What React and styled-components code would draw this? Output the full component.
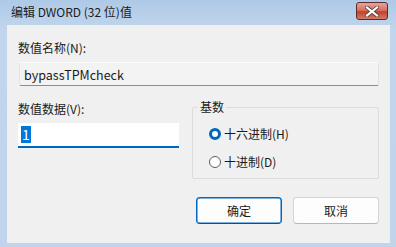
import React from "react";
import styled, { createGlobalStyle } from "styled-components";

const GlobalStyle = createGlobalStyle`
  html, body { margin: 0; padding: 0; }
  body {
    font-family: "Noto Sans CJK SC", "Noto Sans", "Liberation Sans", sans-serif;
    font-size: 12px;
    color: #1a1a1a;
  }
`;

const Window = styled.div`
  width: 396px;
  height: 247px;
  display: flex;
  flex-direction: column;
  background: linear-gradient(180deg, #aec9e7 0%, #c1d6ec 12%, #c0d5eb 100%);
  box-sizing: border-box;
`;

const TitleBar = styled.div`
  height: 25px;
  flex: none;
  display: flex;
  align-items: center;
  justify-content: space-between;
  padding: 0 8px 0 11px;
  box-sizing: border-box;
`;

const Title = styled.span`
  font-size: 12px;
  line-height: 16px;
  color: #1c1c1c;
  margin-top: -1px;
`;

const CloseButton = styled.button`
  width: 32px;
  height: 18px;
  margin-top: -3px;
  padding: 0;
  border: 1px solid #5d2a2e;
  border-radius: 3px;
  background: linear-gradient(180deg, #e8a496 0%, #d6725f 45%, #c4402b 55%, #d47a66 100%);
  display: flex;
  align-items: center;
  justify-content: center;
`;

const Panel = styled.div`
  flex: 1;
  margin: 0 6px 4px 7px;
  background: #f0f0f0;
  padding: 15px 11px 0 11px;
  display: flex;
  flex-direction: column;
`;

const Label = styled.div`
  line-height: 16px;
  height: 16px;
  color: #1a1a1a;
`;

const ReadOnlyField = styled.div`
  margin: 6px 0 0 1px;
  height: 24px;
  box-sizing: border-box;
  border: 1px solid #e3e3e3;
  border-top-color: #fbfbfb;
  border-bottom-color: #8d8d8d;
  border-radius: 2px;
  background: #f3f3f3;
  padding: 0 4px;
  display: flex;
  align-items: center;
  font-size: 12.5px;
  color: #1a1a1a;
`;

const Row = styled.div`
  display: flex;
  gap: 13px;
  margin-top: 15px;
`;

const Column = styled.div`
  width: 161px;
  display: flex;
  flex-direction: column;
`;

const EditField = styled.div`
  margin-top: 6px;
  height: 25px;
  box-sizing: border-box;
  background: #ffffff;
  border-bottom: 2px solid #0067c0;
  padding: 0 3px;
  display: flex;
  align-items: center;
`;

const Selected = styled.span`
  background: #0078d7;
  color: #ffffff;
  font-size: 14px;
  line-height: 17px;
  padding: 0 1px;
`;

const Group = styled.fieldset`
  flex: 1;
  margin: 0;
  margin-top: -2px;
  padding: 10px 0 0 0;
  height: 80px;
  box-sizing: border-box;
  border: 1px solid #dcdcdc;
  border-radius: 2px;
  display: flex;
  flex-direction: column;
  gap: 10px;
`;

const Legend = styled.legend`
  padding: 0 2px;
  margin-left: 5px;
  line-height: 16px;
`;

const Option = styled.label`
  display: flex;
  align-items: center;
  gap: 3px;
  height: 18px;
  line-height: 16px;
  padding-left: 16px;
`;

const Radio = styled.span`
  width: 12px;
  height: 12px;
  box-sizing: border-box;
  border-radius: 50%;
  border: ${(p) => (p.$checked ? "3.5px solid #0067c0" : "1px solid #5c5c5c")};
  background: #ffffff;
  flex: none;
`;

const Footer = styled.div`
  display: flex;
  justify-content: flex-end;
  gap: 11px;
  margin-top: 18px;
`;

const Button = styled.button`
  width: 86px;
  height: 27px;
  box-sizing: border-box;
  border-radius: 4px;
  font-family: inherit;
  font-size: 12px;
  color: #1a1a1a;
  background: #fdfdfd;
  border: 1px solid ${(p) => (p.$primary ? "#0067c0" : "#d4d4d4")};
  border-bottom-color: ${(p) => (p.$primary ? "#00539c" : "#b8b8b8")};
  box-shadow: ${(p) => (p.$primary ? "inset 0 0 0 0.5px #0067c0" : "none")};
`;

const CloseGlyph = () => (
  <svg width="14" height="11" viewBox="0 0 14 11">
    <path
      d="M2 1.5 L12 9.5 M12 1.5 L2 9.5"
      stroke="#4a3a3a"
      strokeWidth="3.6"
      strokeLinecap="square"
    />
    <path
      d="M2 1.5 L12 9.5 M12 1.5 L2 9.5"
      stroke="#ffffff"
      strokeWidth="2.2"
      strokeLinecap="square"
    />
  </svg>
);

const options = [
  { label: "十六进制(H)", checked: true },
  { label: "十进制(D)", checked: false },
];

export default function App() {
  return (
    <>
      <GlobalStyle />
      <Window>
        <TitleBar>
          <Title>编辑 DWORD (32 位)值</Title>
          <CloseButton aria-label="关闭">
            <CloseGlyph />
          </CloseButton>
        </TitleBar>
        <Panel>
          <Label>数值名称(N):</Label>
          <ReadOnlyField>bypassTPMcheck</ReadOnlyField>
          <Row>
            <Column>
              <Label>数值数据(V):</Label>
              <EditField>
                <Selected>1</Selected>
              </EditField>
            </Column>
            <Group>
              <Legend>基数</Legend>
              {options.map((o) => (
                <Option key={o.label}>
                  <Radio $checked={o.checked} />
                  {o.label}
                </Option>
              ))}
            </Group>
          </Row>
          <Footer>
            <Button $primary>确定</Button>
            <Button>取消</Button>
          </Footer>
        </Panel>
      </Window>
    </>
  );
}
